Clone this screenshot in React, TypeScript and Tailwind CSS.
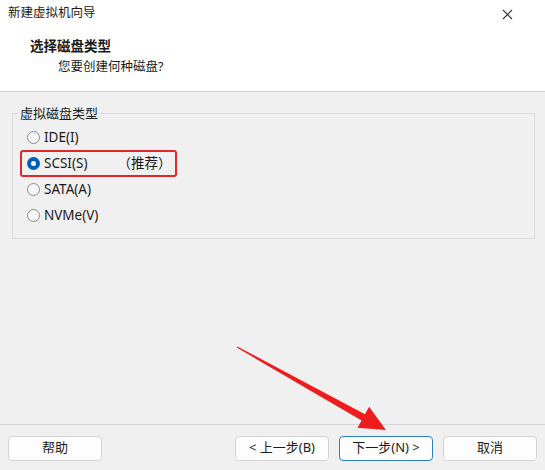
import React, { useState } from "react";

const FONT = "font-['Noto_Sans','Noto_Sans_CJK_SC',sans-serif]";

const OPTIONS = [
  { id: "ide", label: "IDE(I)" },
  { id: "scsi", label: "SCSI(S)", note: "（推荐）" },
  { id: "sata", label: "SATA(A)" },
  { id: "nvme", label: "NVMe(V)" },
];

function Radio({ checked }: { checked: boolean }) {
  if (checked) {
    return (
      <span className="flex h-[13px] w-[13px] items-center justify-center rounded-full bg-[#005fb8]">
        <span className="h-[5px] w-[5px] rounded-full bg-white" />
      </span>
    );
  }
  return <span className="h-[13px] w-[13px] rounded-full border border-[#8a8a8a] bg-[#f7f7f7]" />;
}

function Btn({ children, primary }: { children: React.ReactNode; primary?: boolean }) {
  return (
    <button
      type="button"
      className={
        primary
          ? "h-[25px] w-[94px] rounded-[4px] border border-[#2f7fc6] bg-[#fdfdfd] text-[13px] text-[#1a1a1a]"
          : "h-[25px] w-[94px] rounded-[4px] border border-[#d3d3d3] bg-[#fdfdfd] text-[13px] text-[#1a1a1a]"
      }
    >
      {children}
    </button>
  );
}

export default function App() {
  const [disk, setDisk] = useState("scsi");

  return (
    <div className={`relative flex h-[470px] w-[545px] flex-col bg-[#f0f0f0] text-[#1a1a1a] ${FONT}`}>
      {/* title bar */}
      <div className="flex h-[27px] items-center justify-between bg-white pl-[8px] pr-[32px]">
        <span className="text-[12.5px]">新建虚拟机向导</span>
        <svg width="11" height="11" viewBox="0 0 11 11" className="mt-[1px]">
          <path d="M1 1 L10 10 M10 1 L1 10" stroke="#333" strokeWidth="1.1" />
        </svg>
      </div>

      {/* header */}
      <div className="h-[65px] border-b border-[#cfcfcf] bg-white">
        <div className="pl-[30px] pt-[10px] text-[13.5px] font-bold leading-[18px]">选择磁盘类型</div>
        <div className="pl-[58px] pt-[3px] text-[12.5px] leading-[18px]">您要创建何种磁盘?</div>
      </div>

      {/* body */}
      <div className="flex-1 border-b border-[#d6d6d6]">
        <fieldset className="ml-[12px] mr-[10px] mt-[12px] border border-[#dadada] pb-[10px] pl-[14px] pt-[2px]">
          <legend className="ml-[-9px] px-[2px] text-[13px] leading-[18px]">虚拟磁盘类型</legend>
          {OPTIONS.map((o) => (
            <div
              key={o.id}
              onClick={() => setDisk(o.id)}
              className="relative flex h-[26px] cursor-default items-center gap-[4px] text-[13.5px]"
            >
              <Radio checked={disk === o.id} />
              <span>{o.label}</span>
              {o.note && <span className="ml-[26px]">{o.note}</span>}
              {o.id === "scsi" && (
                <span className="absolute left-[-7px] top-0 h-[27px] w-[157px] rounded-[3px] border-2 border-[#e3262a]" />
              )}
            </div>
          ))}
        </fieldset>
      </div>

      {/* buttons */}
      <div className="flex h-[45px] items-center gap-[10px] pl-[8px] pr-[8px] pt-[1px]">
        <Btn>帮助</Btn>
        <div className="flex-1" />
        <Btn>&lt; 上一步(B)</Btn>
        <Btn primary>下一步(N) &gt;</Btn>
        <Btn>取消</Btn>
      </div>

      {/* annotation arrow */}
      <svg className="pointer-events-none absolute left-0 top-0" width="545" height="470">
        <polygon
          points="236.7,347.6 237.3,346.4 365,414.2 369.1,406.8 386,430 357.5,427.8 361.6,420.4"
          fill="#ee1c1c"
        />
      </svg>
    </div>
  );
}
